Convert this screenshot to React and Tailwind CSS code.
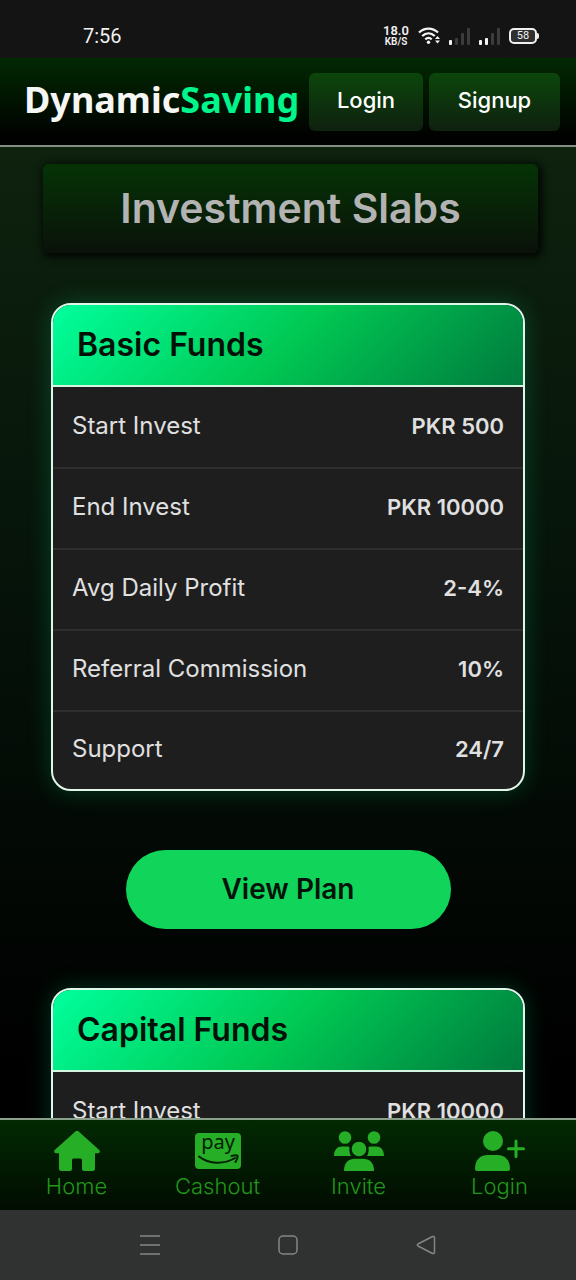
const plans = [
  {
    title: 'Basic Funds',
    rows: [
      ['Start Invest', 'PKR 500'],
      ['End Invest', 'PKR 10000'],
      ['Avg Daily Profit', '2-4%'],
      ['Referral Commission', '10%'],
      ['Support', '24/7'],
    ],
  },
  {
    title: 'Capital Funds',
    rows: [['Start Invest', 'PKR 10000']],
  },
];

function SignalIcon({ level }) {
  return (
    <svg width="21" height="17" viewBox="0 0 21 17" aria-hidden="true">
      {[5, 7, 12, 17].map((h, i) => (
        <rect key={i} x={i * 6} y={17 - h} width="3" height={h} rx="1" fill={i < level ? '#f4f4f4' : '#3c3c3c'} />
      ))}
    </svg>
  );
}

function StatusBar() {
  return (
    <div className="h-[58px] shrink-0 bg-[#141414] text-[#f0f0f0] flex items-center justify-between pt-[14px] pl-[83px] pr-[37px]">
      <span className="text-[20px] leading-6 font-['Roboto',sans-serif]">7:56</span>
      <div className="flex items-center">
        <div className="flex flex-col items-center font-semibold font-['Roboto',sans-serif]">
          <span className="text-[13px] leading-3">18.0</span>
          <span className="text-[10px] leading-[10px]">KB/S</span>
        </div>
        <svg className="ml-[9px]" width="23" height="18" viewBox="0 0 23 18" fill="none" stroke="#f4f4f4" strokeWidth="2.3" aria-hidden="true">
          <path d="M1 5.500C6.500.2 14.500.2 20 5.500" />
          <path d="M4.200 9C8 5.400 13 5.400 16.800 9" />
          <path d="M7.300 12.300c2-1.800 4.400-1.800 6.400 0" />
          <circle cx="10.500" cy="15.300" r="1.700" fill="#f4f4f4" stroke="none" />
          <path d="m17 12 2.500-3 2.500 3zM17 13.500l2.500 3 2.500-3z" fill="#f4f4f4" stroke="none" />
        </svg>
        <div className="ml-2 flex gap-[9px]">
          <SignalIcon level={1} />
          <SignalIcon level={2} />
        </div>
        <div className="ml-[9px] flex items-center">
          <span className="w-7 h-4 rounded-[5px] border-2 border-[#f0f0f0] bg-[#303030] text-[11px] leading-3 text-center font-['Roboto',sans-serif]">58</span>
          <span className="w-[2px] h-[6px] rounded-r-sm bg-[#f0f0f0]" />
        </div>
      </div>
    </div>
  );
}

function Header() {
  return (
    <header className="h-[89px] shrink-0 flex items-center border-b-2 border-[#858b85] bg-[linear-gradient(180deg,#022902,#000100_90%)] pl-6 pr-4">
      <a href="#" className="mr-auto text-[36px] leading-[50px] pb-1 font-bold text-[#f6f6f4] font-['Noto_Sans',sans-serif]">
        Dynamic<span className="text-[#00f58d]">Saving</span>
      </a>
      <div className="flex gap-[6px] text-[22px] font-medium text-white">
        <button className="h-[58px] w-[114px] rounded-md bg-[linear-gradient(180deg,#0b460b,#0f200f)] pb-[2px]">Login</button>
        <button className="h-[58px] w-[131px] rounded-md bg-[linear-gradient(180deg,#0b460b,#0f200f)] pb-[2px]">Signup</button>
      </div>
    </header>
  );
}

function PlanCard({ plan }) {
  return (
    <section className="overflow-hidden rounded-[20px] border-2 border-[#e2f5ea] bg-[#1e1e1e] shadow-[0_0_24px_rgba(0,255,157,0.2)]">
      <h2 className="h-[82px] border-b-2 border-[#d5f5e3] bg-[linear-gradient(135deg,#00ff9d,#00c853,#007a3d)] pl-6 text-[32px] leading-[80px] font-semibold text-[#031008]">
        {plan.title}
      </h2>
      <table className="w-full leading-7 text-[#e0e0e0]">
        <tbody>
          {plan.rows.map(([label, value]) => (
            <tr key={label} className="h-[81px] border-b-2 border-[#2e2e2e] not-first:last:h-[78px] last:border-b-0">
              <th scope="row" className="pb-[3px] pl-[19px] text-left text-[24px] font-normal">{label}</th>
              <td className="pb-[3px] pr-[19px] text-right text-[22px] font-semibold">{value}</td>
            </tr>
          ))}
        </tbody>
      </table>
    </section>
  );
}

function HomeIcon() {
  return (
    <svg width="46" height="40" viewBox="0 0 46 40" fill="#27ae27" aria-hidden="true">
      <path d="M20.800.9a3.200 3.200 0 0 1 4.400 0L45 18.800c1.600 1.500.8 3.400-1.200 3.400H41V37.500q0 2.500-2.500 2.500H30q-2 0-2-2V29q0-1.500-1.500-1.500h-7Q18 27.500 18 29v9q0 2-2 2H7.500Q5 40 5 37.500V22.200H2.200C.2 22.200-.6 20.300 1 18.800z" />
    </svg>
  );
}

function PayIcon() {
  return (
    <svg width="46" height="36" viewBox="0 0 46 36" aria-hidden="true">
      <rect width="46" height="36" rx="4" fill="#27ae27" />
      <text x="23" y="16" textAnchor="middle" fontSize="20" fontWeight="400" fontFamily="Noto Sans, sans-serif" fill="#032003">pay</text>
      <g fill="none" stroke="#032003" strokeWidth="2" strokeLinecap="round" strokeLinejoin="round">
        <path d="M4 23.500C14 31.500 29 31.500 40 25" />
        <path d="M36.500 23q4.500-1.500 6-.2.5 2-2 6.200" />
      </g>
    </svg>
  );
}

function InviteIcon() {
  return (
    <svg width="50" height="40" viewBox="0 0 50 40" fill="#27ae27" aria-hidden="true">
      <circle cx="11" cy="6.500" r="6.300" />
      <circle cx="40" cy="6.500" r="6.300" />
      <path d="M0 25c0-6.500 3.500-9.500 8-9.500h5c1.200 0 2 .3 2.700 1-.8 3.500 0 6.300 1.300 8.500z" />
      <path d="M50 25c0-6.500-3.500-9.500-8-9.500h-5c-1.200 0-2 .3-2.700 1 .8 3.500 0 6.300-1.300 8.500z" />
      <circle cx="25" cy="18" r="8.300" stroke="#021c02" strokeWidth="2" />
      <path d="M10 40c0-9 5-12.200 11-12.200h8c6 0 11 3.200 11 12.200z" />
    </svg>
  );
}

function PersonAddIcon() {
  return (
    <svg width="50" height="40" viewBox="0 0 50 40" fill="#27ae27" aria-hidden="true">
      <circle cx="18" cy="10" r="10" />
      <path d="M0 38c0-9 5-14 12.500-14h10C30 24 35 29 35 38q0 2-2 2H2q-2 0-2-2z" />
      <path d="M41 10v15.500M33.500 17.700h15" stroke="#27ae27" strokeWidth="3" strokeLinecap="round" />
    </svg>
  );
}

const tabs = [
  { label: 'Home', Icon: HomeIcon },
  { label: 'Cashout', Icon: PayIcon },
  { label: 'Invite', Icon: InviteIcon },
  { label: 'Login', Icon: PersonAddIcon },
];

function BottomNav() {
  return (
    <nav className="h-[92px] shrink-0 grid grid-cols-4 border-t-2 border-[#8aa08a] bg-[linear-gradient(180deg,#022902,#010c01)] px-[6px] pt-[10px]">
      {tabs.map(({ label, Icon }) => (
        <a key={label} href="#" className="flex flex-col items-center text-[22px] leading-[30px] font-light text-[#22961a]">
          <span className="h-[41px] flex items-center">
            <Icon />
          </span>
          {label}
        </a>
      ))}
    </nav>
  );
}

function SystemNav() {
  return (
    <div className="h-[70px] shrink-0 flex items-center justify-center gap-[116px] bg-[#303131]">
      <button aria-label="Recent apps">
        <svg width="22" height="22" viewBox="0 0 22 22" stroke="#858585" strokeWidth="1.500" aria-hidden="true">
          <path d="M1 2h20M1 11h20M1 20h20" />
        </svg>
      </button>
      <button aria-label="Home screen">
        <svg width="22" height="22" viewBox="0 0 22 22" fill="none" stroke="#858585" strokeWidth="1.500" aria-hidden="true">
          <rect x="2" y="2" width="18" height="18" rx="4" />
        </svg>
      </button>
      <button aria-label="Back">
        <svg width="22" height="22" viewBox="0 0 22 22" fill="none" stroke="#858585" strokeWidth="1.500" strokeLinejoin="round" aria-hidden="true">
          <path d="M17.500 2.500 3 10q-1.500 1 0 2l14.500 7.500q2 .5 2-1.500V4q0-2-2-1.500z" />
        </svg>
      </button>
    </div>
  );
}

export default function App() {
  return (
    <div className="h-screen flex flex-col overflow-hidden bg-black font-['Inter',sans-serif]">
      <StatusBar />
      <Header />
      <main className="flex-1 min-h-0 overflow-y-auto [scrollbar-width:none] bg-[linear-gradient(180deg,#0e220e,#06140a_42%,#000000_95%)]">
        <h1 className="mt-[17px] ml-[43px] mr-[38px] h-[89px] rounded-md bg-[linear-gradient(180deg,#053305,#0a110a)] text-center text-[41px] leading-[88px] font-semibold text-[#b3b3b3] shadow-[2px_2px_8px_2px_rgba(0,0,0,0.9)]">
          Investment Slabs
        </h1>
        <div className="mt-[50px] px-[51px] flex flex-col">
          {plans.map((plan) => (
            <div key={plan.title} className="flex flex-col">
              <PlanCard plan={plan} />
              <button className="my-[59px] h-[79px] self-center rounded-full bg-[#10d55a] px-24 pb-[2px] text-[28px] font-semibold text-[#03130a]">
                View Plan
              </button>
            </div>
          ))}
        </div>
      </main>
      <BottomNav />
      <SystemNav />
    </div>
  );
}
